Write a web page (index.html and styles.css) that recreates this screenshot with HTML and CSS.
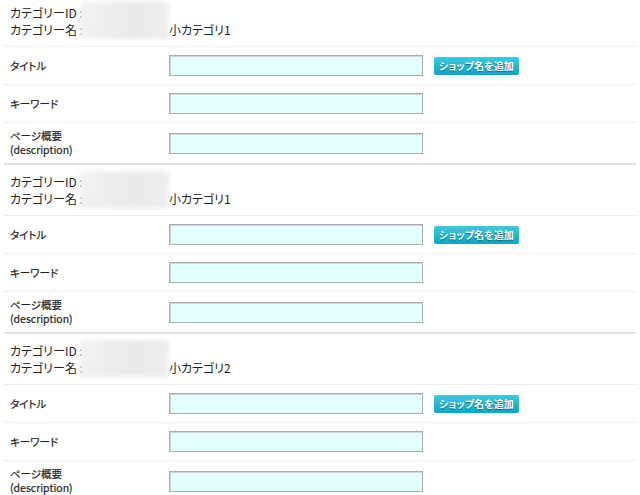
FILE: index.html
```html
<!DOCTYPE html>
<html lang="ja">
<head>
    <meta charset="UTF-8">
    <meta name="viewport" content="width=device-width, initial-scale=1.0">
    <title>カテゴリー SEO設定</title>
    <link rel="stylesheet" href="styles.css">
</head>
<body>
    <div class="container">
        <!-- 小カテゴリ1 -->
        <div class="category">
            <div class="cat-head">
                <span class="cat-label">カテゴリーID :</span>
                <div class="mask"></div>
                <span class="cat-value"></span>
                <span class="cat-label">カテゴリー名 :</span>
                <span class="cat-value">小カテゴリ1</span>
            </div>
            <div class="row">
                <label class="row-label">タイトル</label>
                <input type="text" class="field" name="title[]">
                <button type="button" class="btn-shop">ショップ名を追加</button>
            </div>
            <div class="row">
                <label class="row-label">キーワード</label>
                <input type="text" class="field" name="keyword[]">
            </div>
            <div class="row row-desc">
                <label class="row-label">ページ概要<br>(description)</label>
                <input type="text" class="field" name="description[]">
            </div>
        </div>

        <div class="category">
            <div class="cat-head">
                <span class="cat-label">カテゴリーID :</span>
                <div class="mask"></div>
                <span class="cat-value"></span>
                <span class="cat-label">カテゴリー名 :</span>
                <span class="cat-value">小カテゴリ1</span>
            </div>
            <div class="row">
                <label class="row-label">タイトル</label>
                <input type="text" class="field" name="title[]">
                <button type="button" class="btn-shop">ショップ名を追加</button>
            </div>
            <div class="row">
                <label class="row-label">キーワード</label>
                <input type="text" class="field" name="keyword[]">
            </div>
            <div class="row row-desc">
                <label class="row-label">ページ概要<br>(description)</label>
                <input type="text" class="field" name="description[]">
            </div>
        </div>

        <div class="category">
            <div class="cat-head">
                <span class="cat-label">カテゴリーID :</span>
                <div class="mask"></div>
                <span class="cat-value"></span>
                <span class="cat-label">カテゴリー名 :</span>
                <span class="cat-value">小カテゴリ2</span>
            </div>
            <div class="row">
                <label class="row-label">タイトル</label>
                <input type="text" class="field" name="title[]">
                <button type="button" class="btn-shop">ショップ名を追加</button>
            </div>
            <div class="row">
                <label class="row-label">キーワード</label>
                <input type="text" class="field" name="keyword[]">
            </div>
            <div class="row row-desc">
                <label class="row-label">ページ概要<br>(description)</label>
                <input type="text" class="field" name="description[]">
            </div>
        </div>
    </div>
</body>
</html>
```

FILE: styles.css
```css
body {
    margin: 0;
    padding: 0;
    background-color: #ffffff;
    font-family: "Noto Sans CJK JP", "Noto Sans", sans-serif;
    font-feature-settings: "palt";
    color: #222;
    font-size: 12px;
}

.container {
    margin-top: -4px; /* la captura corta la parte de arriba */
    padding: 0 4px;
}

.category {
    border-bottom: 2px solid #e2e2e2;
}

.cat-head {
    display: grid;
    grid-template-columns: 70px 89px 1fr;
    grid-template-rows: 17px 17px;
    padding: 8px 6px;
    line-height: 17px;
}

.cat-label {
    white-space: nowrap;
}

.mask {
    grid-row: 1 / 3;
    grid-column: 2;
    margin: -2px 0 -1px;
    background: linear-gradient(100deg, #f2f2f2, #e9e9e9 60%, #eeeeee);
    filter: blur(2px);
}

.row {
    display: flex;
    align-items: center;
    height: 38px;
    box-sizing: border-box;
    border-top: 1px dotted #dcdcdc;
    padding-left: 6px;
}

.row-desc {
    height: 41px;
}

.row-label {
    width: 159px;
    font-size: 10.5px;
    line-height: 14px;
    color: #222;
    -webkit-text-stroke: 0.2px #222;
}

.field {
    width: 254px;
    height: 21px;
    box-sizing: border-box;
    margin: 0;
    padding: 2px 4px;
    border: 1px solid #a7acac;
    box-shadow: inset 1px 1px 0 #d2d6d6;
    background-color: #e4fefe;
    font-size: 12px;
}

.btn-shop {
    margin-left: 11px;
    height: 18px;
    padding: 0 5px;
    border: none;
    border-radius: 2px;
    background: linear-gradient(#3ccbe0, #0ba6c5);
    color: #fff;
    font-family: "Noto Sans CJK JP", sans-serif;
    font-feature-settings: "palt";
    font-size: 10px;
    font-weight: bold;
    line-height: 18px;
    text-shadow: 0 1px 1px rgba(0, 60, 80, 0.6);
    cursor: pointer;
}
```
